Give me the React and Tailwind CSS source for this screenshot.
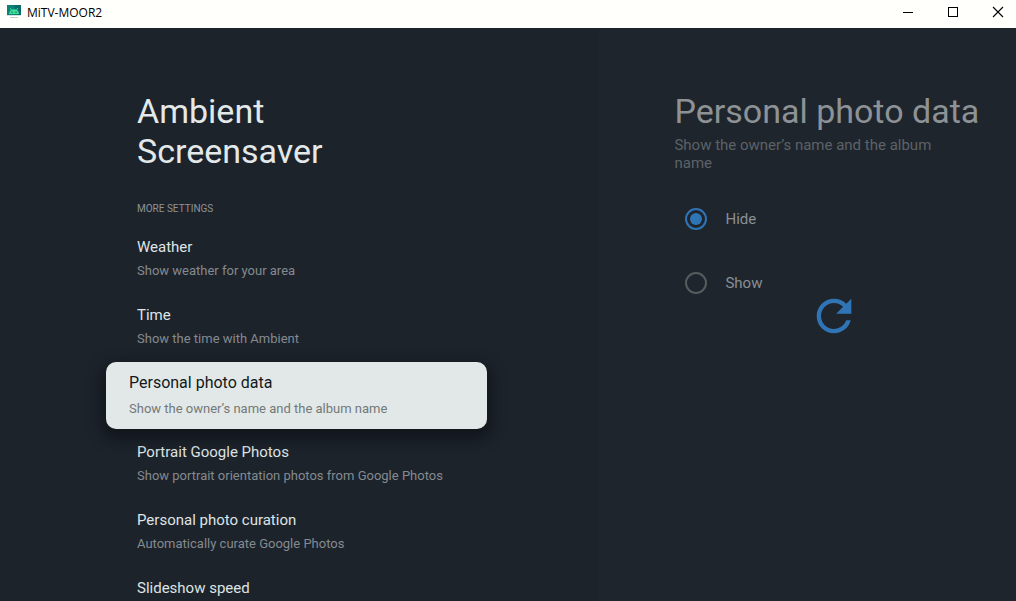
import { useState } from "react";

const settings = [
  { title: "Weather", detail: "Show weather for your area" },
  { title: "Time", detail: "Show the time with Ambient" },
  { title: "Personal photo data", detail: "Show the owner’s name and the album name" },
  { title: "Portrait Google Photos", detail: "Show portrait orientation photos from Google Photos" },
  { title: "Personal photo curation", detail: "Automatically curate Google Photos" },
  { title: "Slideshow speed" },
];

function AppIcon() {
  return (
    <svg className="size-4" viewBox="0 0 16 16" aria-hidden="true">
      <rect x="1" y="0" width="14" height="11" fill="#0c8079" />
      <path d="M8 0h7v11h-3z" fill="#0a6a6c" />
      <path d="M3 9a5 4.8 0 0 1 10 0z" fill="#3ddc97" />
      <path d="M4.2 3l1.6 2.4M11.8 3l-1.6 2.4" stroke="#3ddc97" strokeWidth="1" />
      <circle cx="6" cy="7.2" r="0.6" fill="#0b5d57" />
      <circle cx="10" cy="7.2" r="0.6" fill="#0b5d57" />
      <rect x="1" y="10" width="14" height="1" fill="#cfe3e0" />
      <rect x="4" y="12" width="8" height="1" fill="#c9cccc" />
    </svg>
  );
}

function TitleBar() {
  return (
    <header className="flex h-7 shrink-0 items-start justify-between bg-[#fffffc] text-black">
      <div className="flex h-[26px] items-center gap-[5px] pl-1.5 font-['Open_Sans',sans-serif] text-xs">
        <AppIcon />
        <span>MiTV-MOOR2</span>
      </div>
      <div className="flex h-6 gap-[33px] pr-3">
        <button aria-label="Minimize" className="flex items-center justify-center">
          <svg className="size-3" viewBox="0 0 12 12" shapeRendering="crispEdges" aria-hidden="true">
            <path d="M1 6.5h10" stroke="currentColor" />
          </svg>
        </button>
        <button aria-label="Maximize" className="flex items-center justify-center">
          <svg className="size-3" viewBox="0 0 12 12" fill="none" shapeRendering="crispEdges" aria-hidden="true">
            <path d="M1.5 1.5h9v9h-9z" stroke="currentColor" />
          </svg>
        </button>
        <button aria-label="Close" className="flex items-center justify-center">
          <svg className="size-3" viewBox="0 0 12 12" fill="none" aria-hidden="true">
            <path d="M1 1l10 10M11 1L1 11" stroke="currentColor" strokeWidth="1.1" />
          </svg>
        </button>
      </div>
    </header>
  );
}

function SettingItem({ title, detail, focused, onFocus }) {
  return (
    <li>
      <button
        onClick={onFocus}
        className={
          focused
            ? "relative -mt-px mb-[3px] block w-full rounded-[10px] bg-[#e2e8e7] pt-[11px] pb-2.5 pl-[23px] text-left shadow-[0_6px_14px_4px_rgba(10,13,18,0.6)]"
            : "block w-full pt-2.5 pb-3.5 pl-[31px] text-left"
        }
      >
        <span className={focused ? "block text-base leading-5 text-[#12181b]" : "block text-[15px] leading-5 text-[#dfe4e6]"}>
          {title}
        </span>
        {detail && (
          <span className={focused ? "mt-1.5 block text-[13px] leading-5 text-[#737879]" : "mt-1 block text-[13px] leading-5 text-[#848a8f]"}>
            {detail}
          </span>
        )}
      </button>
    </li>
  );
}

function RadioRow({ label, checked, onChange }) {
  return (
    <label className="flex h-16 items-center gap-[18px]">
      <input
        type="radio"
        name="photo-data"
        checked={checked}
        onChange={onChange}
        className="size-[22px] appearance-none rounded-full border-2 border-[#565b5e] bg-clip-content p-[3px] checked:border-[#2f74b5] checked:bg-[#2f74b5]"
      />
      <span>{label}</span>
    </label>
  );
}

export default function App() {
  const [focused, setFocused] = useState(2);
  const [choice, setChoice] = useState("Hide");

  return (
    <div className="flex h-screen flex-col overflow-hidden bg-[#1d232b] font-[Roboto,sans-serif]">
      <TitleBar />
      <div className="flex min-h-0 flex-1">
        <main className="w-[59%] overflow-hidden pt-[63px] pl-[106px]">
          <h1 className="w-[250px] pl-[31px] text-[34px] leading-10 text-[#e3e9ea]">Ambient Screensaver</h1>
          <h2 className="mt-[30px] pl-[31px] text-[10px] leading-4 text-[#8d9397] uppercase">More settings</h2>
          <ul className="mt-2.5 w-[381px]">
            {settings.map((item, index) => (
              <SettingItem key={item.title} {...item} focused={index === focused} onFocus={() => setFocused(index)} />
            ))}
          </ul>
        </main>
        <aside className="relative flex-1 bg-[#1f252c] pt-[63px] pl-[75px]">
          <h2 id="photo-data-title" className="text-[34px] leading-10 whitespace-nowrap text-[#8d9296]">
            Personal photo data
          </h2>
          <p className="mt-[5px] w-[270px] text-[15px] leading-[18px] text-[#5c6268]">
            Show the owner’s name and the album name
          </p>
          <fieldset aria-labelledby="photo-data-title" className="mt-[15px] pl-[11px] text-[15px] text-[#8a8f94]">
            {["Hide", "Show"].map((label) => (
              <RadioRow key={label} label={label} checked={choice === label} onChange={() => setChoice(label)} />
            ))}
          </fieldset>
          <div className="pointer-events-none absolute inset-0 flex items-center justify-center pt-0.5 pl-[53px]">
            <svg role="img" aria-label="Loading" className="size-[52px] text-[#2f74b5]" viewBox="0 0 24 24" fill="currentColor">
              <path d="M17.65 6.35A7.958 7.958 0 0012 4c-4.42 0-7.99 3.58-7.99 8s3.57 8 7.99 8c3.73 0 6.84-2.55 7.73-6h-2.08A5.99 5.99 0 0112 18c-3.31 0-6-2.69-6-6s2.69-6 6-6c1.66 0 3.14.69 4.22 1.78L13 11h7V4z" />
            </svg>
          </div>
        </aside>
      </div>
    </div>
  );
}
